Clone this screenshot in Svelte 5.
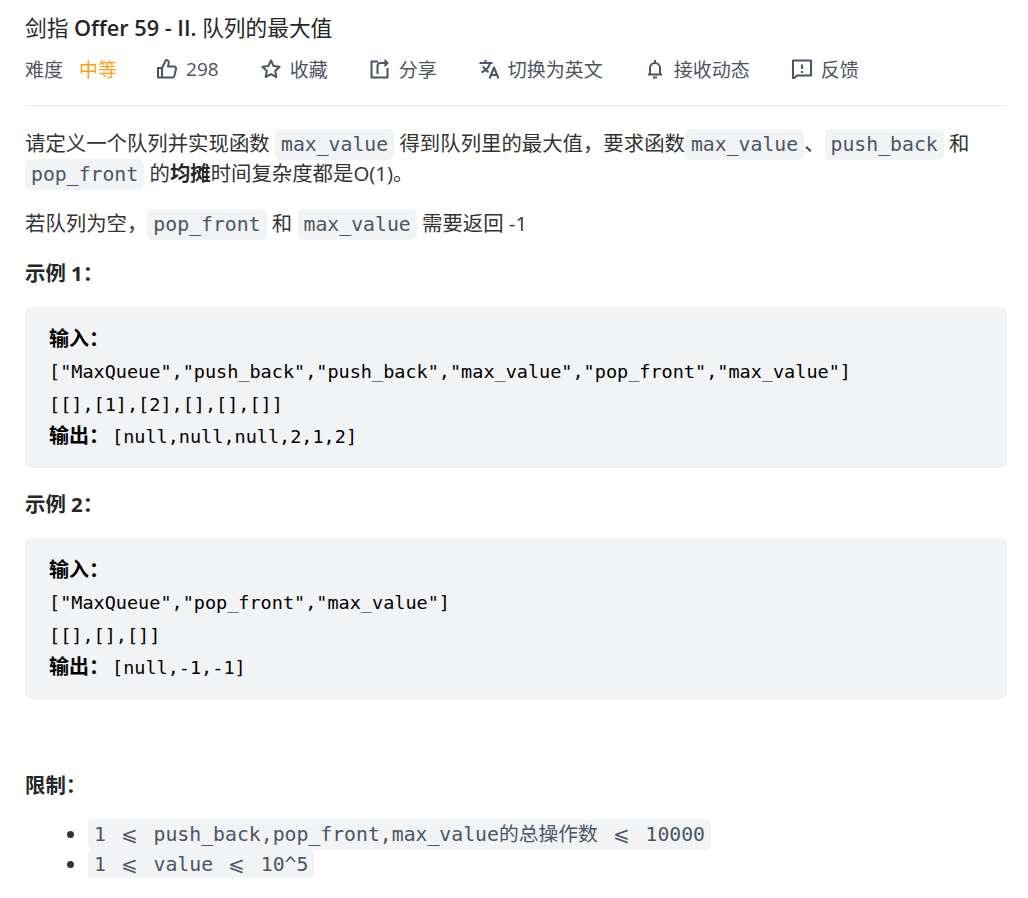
<script lang="ts">
  const actions = [
    { icon: "thumb", label: "298" },
    { icon: "star", label: "收藏" },
    { icon: "share", label: "分享" },
    { icon: "lang", label: "切换为英文" },
    { icon: "bell", label: "接收动态" },
    { icon: "chat", label: "反馈" }
  ];
</script>

<main class="page">
  <h1>剑指 <span class="latin">Offer 59 - II.</span> 队列的最大值</h1>
  <div class="meta">
    <span class="item">难度</span>
    <span class="level">中等</span>
    {#each actions as a}
      <span class="action">
        <svg viewBox="2 2 20 20" fill="none" stroke="#4b5563" stroke-width="2" stroke-linejoin="round">
          {#if a.icon === "thumb"}
            <path d="M3 11h4v9.500H3zM7 11l4-8c2 0 3 1.200 2.700 3L13 9.500h6c1.500 0 2.300 1.200 2 2.600l-1.700 6.800c-.3 1.100-1 1.600-2 1.600H7" />
          {:else if a.icon === "star"}
            <path d="M12 3.500l2.600 5.500 6 .8-4.400 4.200 1.100 6-5.300-2.900-5.300 2.900 1.100-6-4.400-4.200 6-.8z" />
          {:else if a.icon === "share"}
            <path d="M10 4.500H3.500v16h16V11M9.500 17V9c0-2 1-3 3-3h6.500M16.500 3l3 3-3 3" />
          {:else if a.icon === "lang"}
            <path d="M2.500 6h13M8.500 3v3M13 6c-.8 4-3.500 7-8.500 9.500M6 9.500c1.200 2.400 3 4.200 5.500 5.500M12.500 21.500l4.500-11 4.500 11M14 18h6" />
          {:else if a.icon === "bell"}
            <path d="M7 17.500v-6.500a5 5 0 0 1 10 0v6.500M5 17.500h14M12 3v2.500M10 20.500h4" />
          {:else}
            <path d="M3 3.500h18v15H7l-4 3.500zM12 7.500v4.500M12 14v2" />
          {/if}
        </svg>
        <span>{a.label}</span>
      </span>
    {/each}
  </div>

  <div class="content">
    <p>请定义一个队列并实现函数 <code>max_value</code> 得到队列里的最大值，要求函数<code>max_value</code>、<code>push_back</code> 和 <code>pop_front</code> 的<strong>均摊</strong>时间复杂度都是O(1)。</p>
    <p>若队列为空，<code>pop_front</code> 和 <code>max_value</code> 需要返回 -1</p>
    <p class="head"><strong>示例 1：</strong></p>
    <pre><strong>输入：</strong>
["MaxQueue","push_back","push_back","max_value","pop_front","max_value"]
[[],[1],[2],[],[],[]]
<strong>输出：</strong>[null,null,null,2,1,2]</pre>
    <p class="head"><strong>示例 2：</strong></p>
    <pre><strong>输入：</strong>
["MaxQueue","pop_front","max_value"]
[[],[],[]]
<strong>输出：</strong>[null,-1,-1]</pre>
    <p class="head limit"><strong>限制：</strong></p>
    <ul>
      <li><code>1 <span class="le">⩽</span> push_back,pop_front,max_value的总操作数 <span class="le">⩽</span> 10000</code></li>
      <li><code>1 <span class="le">⩽</span> value <span class="le">⩽</span> 10^5</code></li>
    </ul>
  </div>
</main>

<style>
  :global(body) {
    background: #fff;
  }
  .page {
    padding: 13px 21px 0 25px;
    font-family: "Open Sans", "Noto Sans CJK SC", sans-serif;
    color: #262626;
  }
  h1 {
    margin: 0;
    font-size: 21.7px;
    font-weight: 400;
    line-height: 30px;
    color: #262626;
  }
  .latin {
    font-weight: 600;
  }
  .meta {
    display: flex;
    align-items: center;
    height: 30px;
    margin-top: 11px;
    padding-bottom: 21px;
    border-bottom: 1px solid #e8e8e8;
    font-size: 19px;
    color: #4b5563;
  }
  .item {
    margin-right: 16px;
  }
  .level {
    color: #ffa116;
    margin-right: 40px;
  }
  .action {
    display: flex;
    align-items: center;
    gap: 9px;
    margin-right: 42px;
  }
  .action:first-of-type {
    margin-right: 37px;
  }
  .action svg {
    width: 20px;
    height: 20px;
    flex: none;
  }
  .content {
    font-size: 20.4px;
    line-height: 30px;
    color: #333;
  }
  p {
    margin: 0 0 20px;
  }
  .content > p:first-child {
    margin-top: 22px;
  }
  .head {
    margin-bottom: 19px;
  }
  code {
    font-family: "DejaVu Sans Mono", "Noto Sans CJK SC", monospace;
    font-size: 19.8px;
    line-height: 1;
    background: #f2f3f5;
    border-radius: 6px;
    padding: 4px 6px;
    color: #4b5563;
  }
  strong {
    font-weight: 700;
    color: #262626;
  }
  pre {
    margin: 0 0 21px;
    padding: 17px 24px 15px;
    background: #f2f3f5;
    border-radius: 6px;
    font-family: "DejaVu Sans Mono", "Noto Sans CJK SC", monospace;
    font-size: 18.5px;
    line-height: 32.25px;
    color: #000;
  }
  pre strong {
    font-size: 20px;
    line-height: 1;
    margin-right: 3px;
    color: #000;
  }
  .limit {
    margin-top: 71px;
    margin-bottom: 18px;
  }
  ul {
    margin: 0;
    padding-left: 63px;
  }
  .le {
    display: inline-block;
    width: 2ch;
    text-align: center;
  }
</style>
